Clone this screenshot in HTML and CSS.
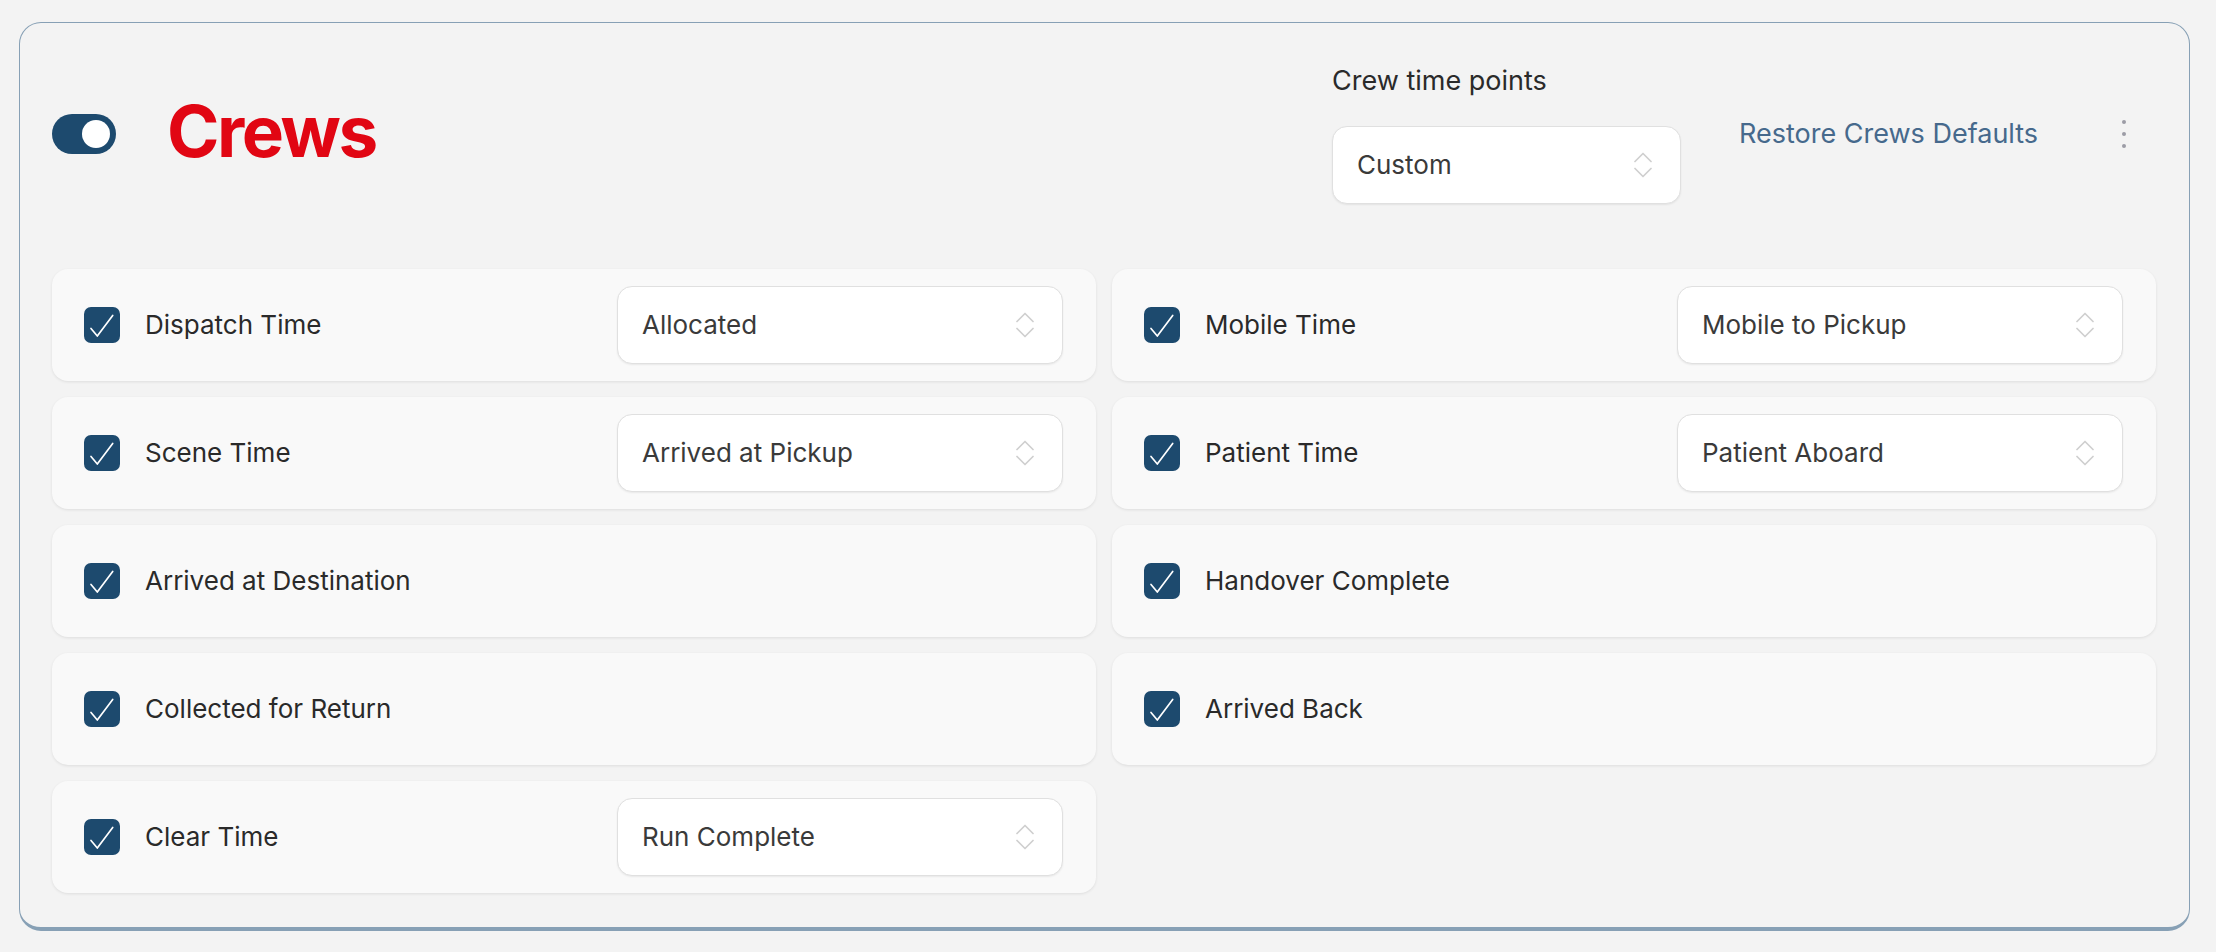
FILE: index.html
```html
<!DOCTYPE html>
<html lang="en">
<head>
<meta charset="utf-8">
<title>Crews</title>
<link rel="stylesheet" href="styles.css">
</head>
<body>
<section class="panel">
  <header class="panel-head">
    <div class="toggle" role="switch" aria-checked="true"><span class="knob"></span></div>
    <h1 class="title">Crews</h1>
    <div class="field">
      <span class="field-label">Crew time points</span>
      <div class="select select-narrow">
        <span class="select-value">Custom</span>
        <svg class="updown" viewBox="0 0 18 26" width="18" height="26"><path d="M1 9.5 L9 1.5 L17 9.5"/><path d="M1 16.5 L9 24.5 L17 16.5"/></svg>
      </div>
    </div>
    <a class="restore" href="#">Restore Crews Defaults</a>
    <button class="kebab" type="button" aria-label="More"><span></span><span></span><span></span></button>
  </header>

  <div class="grid">
    <div class="row">
      <span class="check"><svg viewBox="0 0 36 36" width="36" height="36"><path d="M7 21.5 L13.3 29 L28.7 8.5"/></svg></span>
      <span class="row-label">Dispatch Time</span>
      <div class="select">
        <span class="select-value">Allocated</span>
        <svg class="updown" viewBox="0 0 18 26" width="18" height="26"><path d="M1 9.5 L9 1.5 L17 9.5"/><path d="M1 16.5 L9 24.5 L17 16.5"/></svg>
      </div>
    </div>
    <div class="row">
      <span class="check"><svg viewBox="0 0 36 36" width="36" height="36"><path d="M7 21.5 L13.3 29 L28.7 8.5"/></svg></span>
      <span class="row-label">Mobile Time</span>
      <div class="select">
        <span class="select-value">Mobile to Pickup</span>
        <svg class="updown" viewBox="0 0 18 26" width="18" height="26"><path d="M1 9.5 L9 1.5 L17 9.5"/><path d="M1 16.5 L9 24.5 L17 16.5"/></svg>
      </div>
    </div>
    <div class="row">
      <span class="check"><svg viewBox="0 0 36 36" width="36" height="36"><path d="M7 21.5 L13.3 29 L28.7 8.5"/></svg></span>
      <span class="row-label">Scene Time</span>
      <div class="select">
        <span class="select-value">Arrived at Pickup</span>
        <svg class="updown" viewBox="0 0 18 26" width="18" height="26"><path d="M1 9.5 L9 1.5 L17 9.5"/><path d="M1 16.5 L9 24.5 L17 16.5"/></svg>
      </div>
    </div>
    <div class="row">
      <span class="check"><svg viewBox="0 0 36 36" width="36" height="36"><path d="M7 21.5 L13.3 29 L28.7 8.5"/></svg></span>
      <span class="row-label">Patient Time</span>
      <div class="select">
        <span class="select-value">Patient Aboard</span>
        <svg class="updown" viewBox="0 0 18 26" width="18" height="26"><path d="M1 9.5 L9 1.5 L17 9.5"/><path d="M1 16.5 L9 24.5 L17 16.5"/></svg>
      </div>
    </div>
    <div class="row">
      <span class="check"><svg viewBox="0 0 36 36" width="36" height="36"><path d="M7 21.5 L13.3 29 L28.7 8.5"/></svg></span>
      <span class="row-label">Arrived at Destination</span>
    </div>
    <div class="row">
      <span class="check"><svg viewBox="0 0 36 36" width="36" height="36"><path d="M7 21.5 L13.3 29 L28.7 8.5"/></svg></span>
      <span class="row-label">Handover Complete</span>
    </div>
    <div class="row">
      <span class="check"><svg viewBox="0 0 36 36" width="36" height="36"><path d="M7 21.5 L13.3 29 L28.7 8.5"/></svg></span>
      <span class="row-label">Collected for Return</span>
    </div>
    <div class="row">
      <span class="check"><svg viewBox="0 0 36 36" width="36" height="36"><path d="M7 21.5 L13.3 29 L28.7 8.5"/></svg></span>
      <span class="row-label">Arrived Back</span>
    </div>
    <div class="row">
      <span class="check"><svg viewBox="0 0 36 36" width="36" height="36"><path d="M7 21.5 L13.3 29 L28.7 8.5"/></svg></span>
      <span class="row-label">Clear Time</span>
      <div class="select">
        <span class="select-value">Run Complete</span>
        <svg class="updown" viewBox="0 0 18 26" width="18" height="26"><path d="M1 9.5 L9 1.5 L17 9.5"/><path d="M1 16.5 L9 24.5 L17 16.5"/></svg>
      </div>
    </div>
  </div>
</section>
</body>
</html>
```

FILE: styles.css
```css
* {
  box-sizing: border-box;
}

html,
body {
  margin: 0;
  background: #f3f3f3;
}

body {
  font-family: Inter, "Noto Sans", "Liberation Sans", sans-serif;
  color: #2a2a2a;
}

.panel {
  margin: 22px 26px 0 19px;
  border: 1px solid #87a0b5;
  border-bottom-width: 4px;
  border-radius: 22px;
  background: #f3f3f3;
  padding: 40px 33px 34px 32px;
}

/* header */
.panel-head {
  display: flex;
  align-items: center;
  margin-bottom: 65px;
}

.toggle {
  width: 64px;
  height: 40px;
  border-radius: 20px;
  background: #1d4a6e;
  display: flex;
  align-items: center;
  justify-content: flex-end;
  padding-right: 6px;
  flex: none;
}

.knob {
  width: 28px;
  height: 28px;
  border-radius: 50%;
  background: #ffffff;
}

.title {
  margin: -5px 0 0 51px;
  font-size: 71px;
  line-height: 1;
  font-weight: 700;
  color: #e10613;
  letter-spacing: -2.5px;
}

.field {
  margin-left: auto;
  display: flex;
  flex-direction: column;
  gap: 27px;
  width: 349px;
}

.field-label {
  font-size: 27px;
  line-height: 36px;
  color: #2a2a2a;
}

.restore {
  margin-left: 58px;
  width: 330px;
  font-size: 27px;
  line-height: 36px;
  color: #46698c;
  text-decoration: none;
}

.kebab {
  margin: 0 12px 0 35px;
  width: 40px;
  height: 40px;
  border: 0;
  padding: 0;
  background: transparent;
  display: flex;
  flex-direction: column;
  align-items: center;
  justify-content: center;
  gap: 8px;
}

.kebab span {
  width: 4px;
  height: 4px;
  border-radius: 50%;
  background: #9c9ca6;
}

/* time point rows */
.grid {
  display: grid;
  grid-template-columns: 1fr 1fr;
  grid-auto-rows: 112px;
  gap: 16px;
}

.row {
  display: flex;
  align-items: center;
  padding: 0 33px 0 32px;
  background: #f9f9f9;
  border-radius: 16px;
  box-shadow: 0 1px 3px rgba(0, 0, 0, 0.09);
}

.check {
  width: 36px;
  height: 36px;
  border-radius: 7px;
  background: #1d4a6e;
  flex: none;
  display: block;
}

.check svg {
  display: block;
  fill: none;
  stroke: #ffffff;
  stroke-width: 1.7;
  stroke-linecap: round;
  stroke-linejoin: round;
}

.row-label {
  margin-left: 25px;
  font-size: 26px;
  line-height: 36px;
  color: #2a2a2a;
}

.select {
  margin-left: auto;
  width: 446px;
  height: 78px;
  background: #ffffff;
  border: 1px solid #e0e0e0;
  border-radius: 15px;
  box-shadow: 0 1px 2px rgba(0, 0, 0, 0.07);
  display: flex;
  align-items: center;
  justify-content: space-between;
  padding: 0 28px 0 24px;
}

.select-narrow {
  margin-left: 0;
  width: 349px;
}

.select-value {
  font-size: 26px;
  line-height: 36px;
  color: #3a3a3a;
}

.updown {
  display: block;
  fill: none;
  stroke: #cfcfcf;
  stroke-width: 1.7;
  stroke-linecap: round;
  stroke-linejoin: round;
}
```
